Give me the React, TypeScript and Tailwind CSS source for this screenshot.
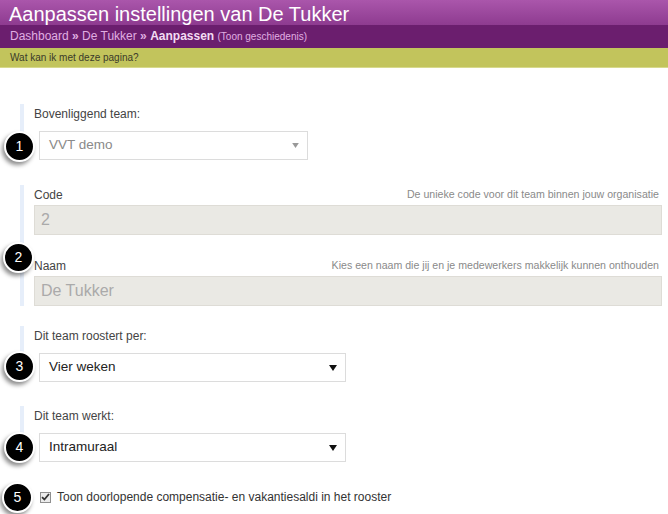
const font = "font-['Liberation_Sans',Arial,sans-serif]";

const Badge = ({ n, className }: { n: number; className: string }) => (
  <div
    className={`absolute flex h-[31px] w-[31px] items-center justify-center rounded-full border-[2px] border-white bg-black text-[14px] text-white shadow-[-2px_3px_4px_rgba(0,0,0,0.45)] ${className}`}
  >
    {n}
  </div>
);

const Arrow = ({ muted }: { muted?: boolean }) => (
  <svg
    width={muted ? 7 : 8}
    height={muted ? 5 : 6}
    viewBox="0 0 8 6"
    className={muted ? "text-[#999]" : "text-[#111]"}
  >
    <path d="M0 0h8L4 6z" fill="currentColor" />
  </svg>
);

const Select = ({
  value,
  width,
  muted,
}: {
  value: string;
  width: string;
  muted?: boolean;
}) => (
  <div
    className={`ml-[5px] flex h-[29px] items-center justify-between border border-[#dcdcdc] bg-white pl-[9px] pr-[8px] text-[13.5px] ${width} ${
      muted ? "text-[#8a8a8a]" : "text-[#222]"
    }`}
  >
    <span>{value}</span>
    <Arrow muted={muted} />
  </div>
);

const Field = ({ label, hint, value }: { label: string; hint: string; value: string }) => (
  <>
    <div className="flex h-[20px] items-center justify-between pr-[3px]">
      <span className="text-[12px] text-[#444]">{label}</span>
      <span className="text-[10.6px] text-[#8a8a8a]">{hint}</span>
    </div>
    <div className="flex h-[30px] items-center border border-[#dedcd6] bg-[#eae9e4] pl-[6px] text-[16px] text-[#aaa]">
      {value}
    </div>
  </>
);

export default function App() {
  return (
    <div className={`${font} min-h-[514px] w-[668px] overflow-hidden bg-white`}>
      <div className="h-[25px] bg-gradient-to-b from-[#aa56ab] to-[#8e3b90] pl-[9px] pt-[4px] text-[20px] leading-[21px] text-white">
        Aanpassen instellingen van De Tukker
      </div>
      <div className="h-[23px] bg-[#6b1e6e] pl-[10px] text-[12px] leading-[22px] text-[#e0aee2]">
        Dashboard <span className="font-bold">»</span> De Tukker <span className="font-bold">»</span>{" "}
        <span className="font-bold text-[#f3dcf3]">Aanpassen</span>{" "}
        <span className="text-[10px]">(Toon geschiedenis)</span>
      </div>
      <div className="h-[20px] border-b border-[#d7d98c] bg-[#c2c45c] pl-[10px] text-[10px] leading-[19px] text-[#3a3a2a]">
        Wat kan ik met deze pagina?
      </div>

      <div className="pl-[20px] pr-[6px] pt-[36px]">
        <div className="relative border-l-[4px] border-[#e6eefa] pb-[2px] pl-[10px]">
          <div className="h-[21px] text-[12px] leading-[21px] text-[#444]">Bovenliggend team:</div>
          <div className="mt-[6px]">
            <Select value="VVT demo" width="w-[269px]" muted />
          </div>
          <Badge n={1} className="left-[-20px] top-[27px]" />
        </div>

        <div className="relative mt-[23px] border-l-[4px] border-[#e6eefa] pl-[10px]">
          <Field label="Code" hint="De unieke code voor dit team binnen jouw organisatie" value="2" />
          <div className="mt-[21px]">
            <Field
              label="Naam"
              hint="Kies een naam die jij en je medewerkers makkelijk kunnen onthouden"
              value="De Tukker"
            />
          </div>
          <Badge n={2} className="left-[-21px] top-[57px]" />
        </div>

        <div className="relative mt-[20px] border-l-[4px] border-[#e6eefa] pl-[10px]">
          <div className="h-[21px] text-[12px] leading-[21px] text-[#444]">Dit team roostert per:</div>
          <div className="mt-[6px]">
            <Select value="Vier weken" width="w-[307px]" />
          </div>
          <Badge n={3} className="left-[-20px] top-[25px]" />
        </div>

        <div className="relative mt-[24px] border-l-[4px] border-[#e6eefa] pl-[10px]">
          <div className="h-[21px] text-[12px] leading-[21px] text-[#444]">Dit team werkt:</div>
          <div className="mt-[6px]">
            <Select value="Intramuraal" width="w-[307px]" />
          </div>
          <Badge n={4} className="left-[-20px] top-[26px]" />
        </div>

        <div className="relative mt-[25px] flex h-[20px] items-center pl-[20px] text-[12px] text-[#333]">
          <span className="flex h-[11px] w-[11px] items-center justify-center border border-[#8f8f8f] bg-[#ececec]">
            <svg width="9" height="8" viewBox="0 0 9 8">
              <path d="M1 4.2L3.4 6.5L8 1" fill="none" stroke="#333" strokeWidth="1.8" />
            </svg>
          </span>
          <span className="ml-[6px]">Toon doorlopende compensatie- en vakantiesaldi in het rooster</span>
          <Badge n={5} className="left-[-18px] top-[-5px]" />
        </div>
      </div>
    </div>
  );
}
